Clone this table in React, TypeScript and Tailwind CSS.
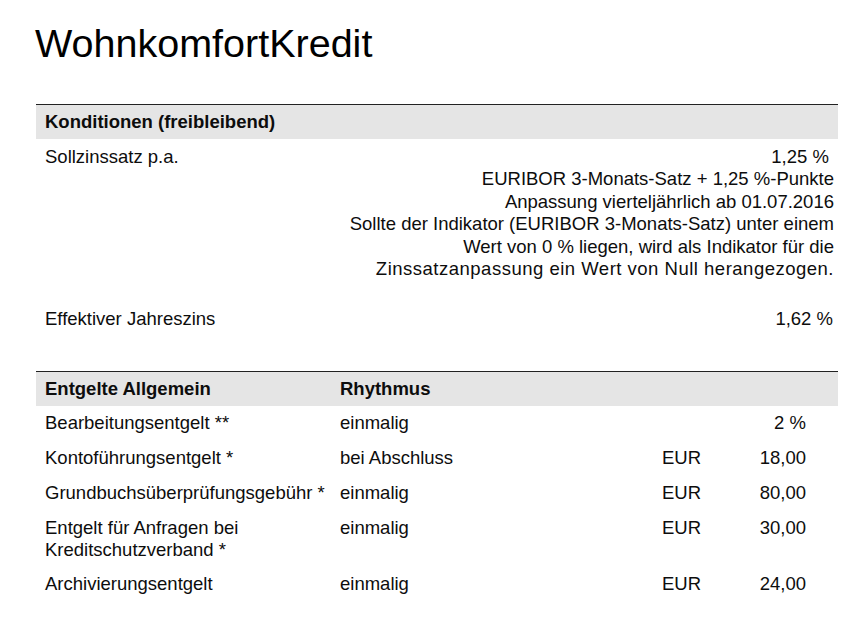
const fees = [
  { label: 'Bearbeitungsentgelt **', rhythm: 'einmalig', cur: '', value: '2 %' },
  { label: 'Kontoführungsentgelt *', rhythm: 'bei Abschluss', cur: 'EUR', value: '18,00' },
  { label: 'Grundbuchsüberprüfungsgebühr *', rhythm: 'einmalig', cur: 'EUR', value: '80,00' },
  { label: 'Entgelt für Anfragen bei Kreditschutzverband *', rhythm: 'einmalig', cur: 'EUR', value: '30,00' },
  { label: 'Archivierungsentgelt', rhythm: 'einmalig', cur: 'EUR', value: '24,00' },
];

export default function App() {
  return (
    <div className="min-h-screen bg-white pl-[36px] pr-[4px] text-[#0d0d0d] font-['Liberation_Sans',Arial,sans-serif]">
      <h1 className="pt-[20px] -ml-[1px] text-[39.5px] leading-[46px] font-normal text-black">WohnkomfortKredit</h1>

      {/* Konditionen */}
      <div className="mt-[38px] border-t border-[#222] text-[18.5px] leading-[22.4px]">
        <div className="flex h-[34px] items-center bg-[#e5e5e5] pl-[9px] font-bold">Konditionen (freibleibend)</div>
        <div className="flex justify-between pl-[9px] pr-[4px] pt-[7px] pb-[21px]">
          <div>Sollzinssatz p.a.</div>
          <div className="text-right">
            <div>1,25 %&nbsp;</div>
            <div>EURIBOR 3-Monats-Satz + 1,25 %-Punkte</div>
            <div>Anpassung vierteljährlich ab 01.07.2016</div>
            <div>Sollte der Indikator (EURIBOR 3-Monats-Satz) unter einem</div>
            <div>Wert von 0 % liegen, wird als Indikator für die</div>
            <div className="tracking-[0.5px]">Zinssatzanpassung ein Wert von Null herangezogen.</div>
          </div>
        </div>
        <div className="flex justify-between pl-[9px] pr-[5px] py-[7px]">
          <div>Effektiver Jahreszins</div>
          <div>1,62 %</div>
        </div>
      </div>

      {/* Entgelte */}
      <div className="mt-[33px] border-t border-[#222] text-[18.5px] leading-[22px]">
        <div className="flex h-[34px] items-center bg-[#e5e5e5] font-bold">
          <div className="w-[304px] pl-[9px]">Entgelte Allgemein</div>
          <div>Rhythmus</div>
        </div>
        {fees.map((f) => (
          <div key={f.label} className="flex py-[6.4px]">
            <div className="w-[304px] pl-[9px] pr-[6px]">{f.label}</div>
            <div className="w-[322px]">{f.rhythm}</div>
            <div className="w-[80px]">{f.cur}</div>
            <div className="w-[64px] text-right">{f.value}</div>
          </div>
        ))}
      </div>
    </div>
  );
}
